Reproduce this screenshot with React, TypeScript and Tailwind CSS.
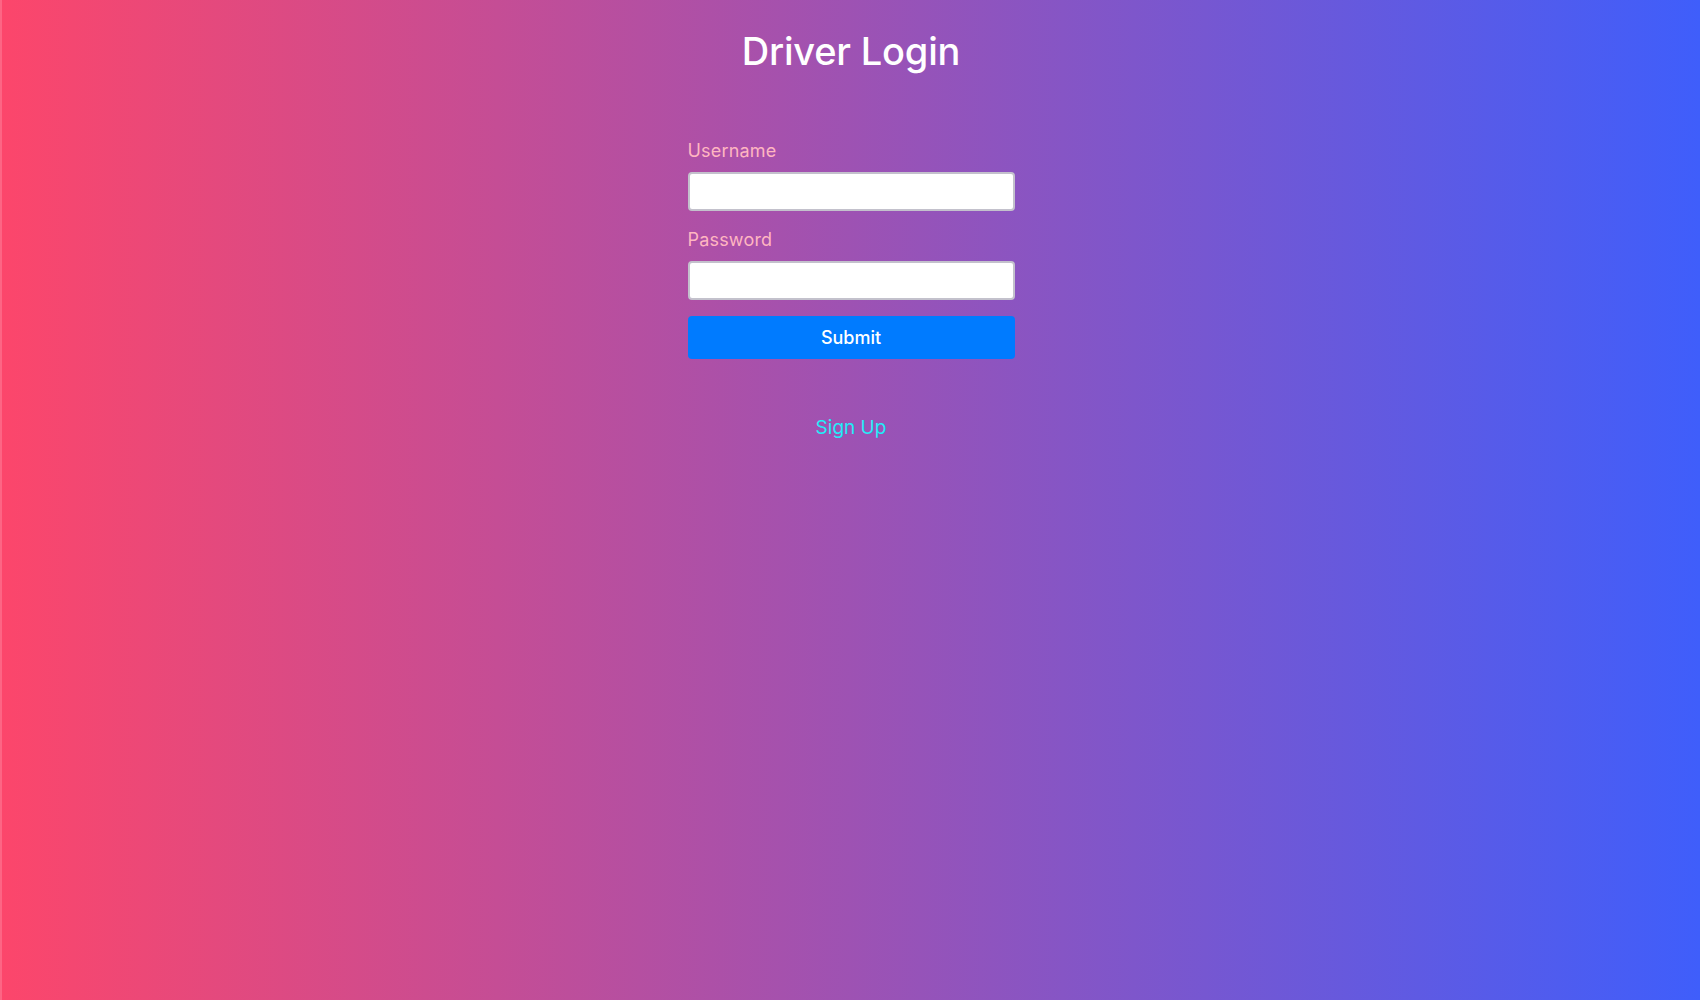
import React from 'react';

const App: React.FC = () => {
  return (
    <div className="min-h-screen w-full border-l-2 border-[#fd6584] bg-[linear-gradient(90deg,#fc466b_0%,#3f5efb_100%)] font-['Inter','Liberation_Sans',sans-serif]">
      <div className="mx-auto flex w-[327px] flex-col pt-[29px]">
        <h1 className="text-center text-[38px] font-medium leading-[1.2] tracking-[-0.005em] text-white">Driver Login</h1>

        <form className="mt-[62px] flex flex-col" onSubmit={(e) => e.preventDefault()}>
          <label className="mb-2 text-[18px] leading-[1.5] tracking-[0.01em] text-[#ffb6c1]">Username</label>
          <input
            type="text"
            className="h-[39px] w-full rounded-[4px] border-2 border-[#c3c1cc] bg-white px-2 text-[16px] text-black outline-none"
          />

          <label className="mb-2 mt-[15px] text-[18px] leading-[1.5] tracking-[0.01em] text-[#ffb6c1]">Password</label>
          <input
            type="password"
            className="h-[39px] w-full rounded-[4px] border-2 border-[#c3c1cc] bg-white px-2 text-[16px] text-black outline-none"
          />

          <button
            type="submit"
            className="mt-[16px] h-[43px] w-full rounded-[4px] bg-[#007bff] text-[18px] font-medium text-white"
          >
            Submit
          </button>
        </form>

        <a href="#" className="mt-[55px] text-center text-[19px] leading-[1.5] text-[#22ecf8]">
          Sign Up
        </a>
      </div>
    </div>
  );
};

export default App;
